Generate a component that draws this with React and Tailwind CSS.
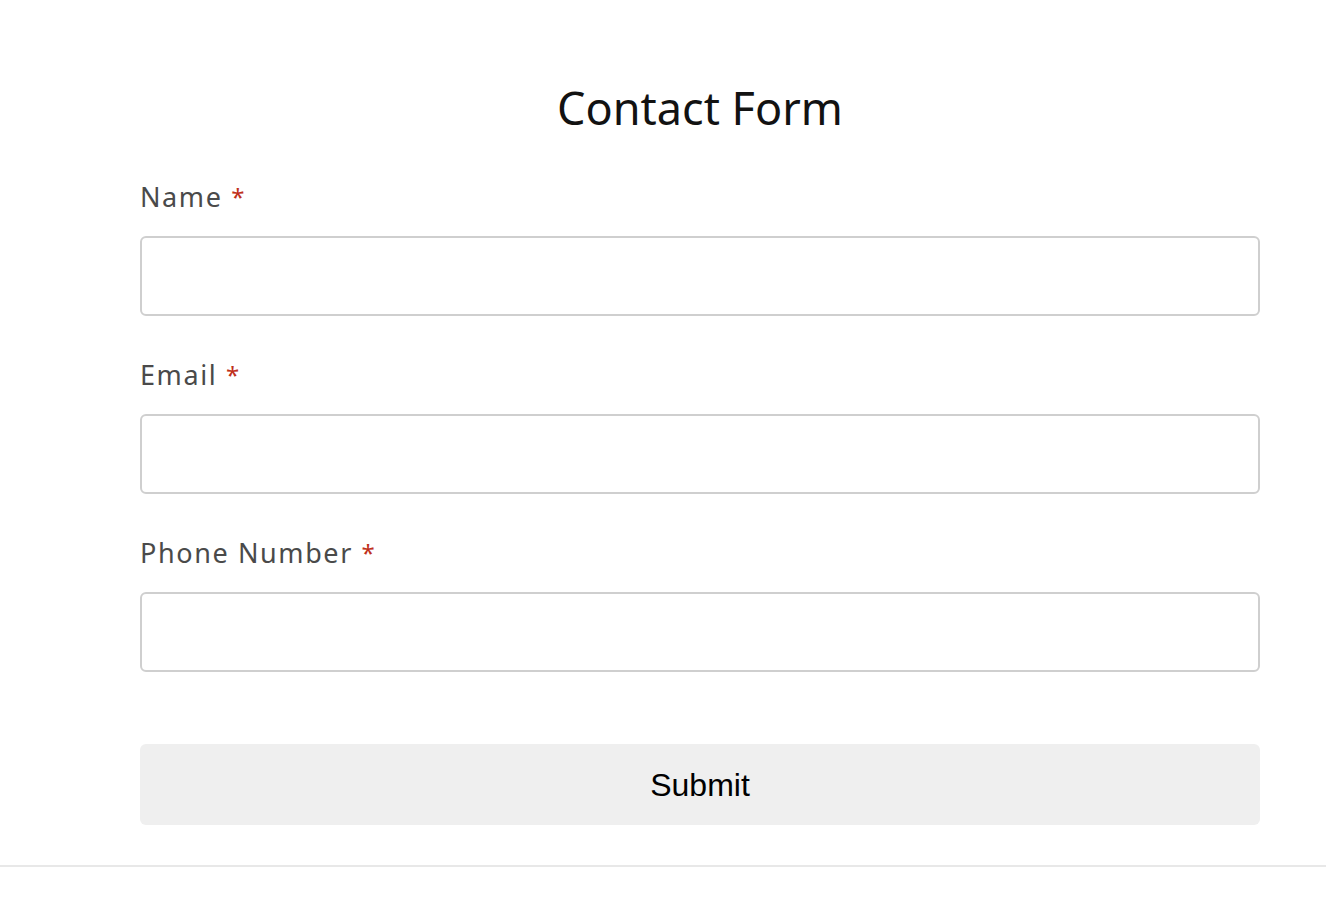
import React from 'react';

const fields = [
  { label: 'Name', type: 'text' },
  { label: 'Email', type: 'email' },
  { label: 'Phone Number', type: 'tel' },
];

const App = () => {
  return (
    <div className="min-h-screen bg-white" style={{ fontFamily: '"Noto Sans", sans-serif' }}>
      <div className="pl-[140px] pr-[66px] pt-[80px] pb-[40px]">
        <h1 className="text-center text-[45px] leading-[56px] text-[#121212]">Contact Form</h1>

        <form className="mt-[43px]">
          {fields.map((field) => (
            <div key={field.label} className="mb-[41px]">
              <label className="block text-[27px] leading-[36px] tracking-[1.6px] text-[#4a4a4a]">
                {field.label} <span className="text-[#c0311c] text-[24px] align-top">*</span>
              </label>
              <input
                type={field.type}
                className="mt-[21px] block w-full h-[80px] rounded-[6px] border-2 border-[#cfcfcf] bg-white px-4 outline-none"
              />
            </div>
          ))}

          <button
            type="button"
            className="mt-[31px] w-full h-[81px] rounded-[6px] bg-[#efefef] text-[32px] text-black"
            style={{ fontFamily: '"Liberation Sans", Arial, sans-serif' }}
          >
            Submit
          </button>
        </form>
      </div>
      <div className="border-t-2 border-[#e8e8e8]" />
    </div>
  );
};

export default App;
